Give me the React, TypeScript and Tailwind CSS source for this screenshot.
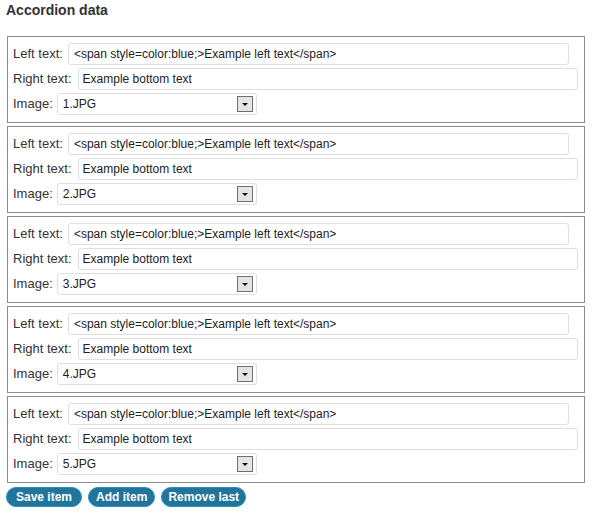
import { useState } from "react"

interface AccordionItem {
  id: number
  left: string
  right: string
  image: string
}

const initialItems: AccordionItem[] = [1, 2, 3, 4, 5].map((n) => ({
  id: n,
  left: "<span style=color:blue;>Example left text</span>",
  right: "Example bottom text",
  image: `${n}.JPG`,
}))

function ItemBox({ item }: { item: AccordionItem }) {
  return (
    <div className="border border-[#8c8c8c] bg-white pl-[5px] pt-[6px] pb-[7px] flex flex-col gap-[3px]">
      <div className="flex items-center gap-[5px]">
        <span className="text-[13px] text-[#333]">Left text:</span>
        <input
          type="text"
          readOnly
          value={item.left}
          className="w-[501px] h-[22px] px-[5px] border border-[#dfdfdf] rounded-[3px] text-[12px] text-[#222] bg-white focus:outline-none"
        />
      </div>
      <div className="flex items-center gap-[6px]">
        <span className="text-[13px] text-[#333]">Right text:</span>
        <input
          type="text"
          readOnly
          value={item.right}
          className="w-[500px] h-[22px] px-[4px] border border-[#dfdfdf] rounded-[3px] text-[12px] text-[#222] bg-white focus:outline-none"
        />
      </div>
      <div className="flex items-center gap-[4px]">
        <span className="text-[13px] text-[#333]">Image:</span>
        <div className="w-[200px] h-[22px] pl-[5px] pr-[3px] border border-[#dfdfdf] rounded-[3px] bg-white flex items-center justify-between">
          <span className="text-[12px] text-[#222]">{item.image}</span>
          <div className="w-[16px] h-[16px] border border-[#6f6f6f] bg-[#e4e4e4] flex items-center justify-center">
            <svg width="8" height="5" viewBox="0 0 8 5">
              <path d="M1 1h6L4 4z" fill="#111" />
            </svg>
          </div>
        </div>
      </div>
    </div>
  )
}

export default function App() {
  const [items] = useState(initialItems)

  return (
    <div className="w-[599px] h-[528px] bg-white px-[7px] font-['Liberation_Sans',Arial,sans-serif]">
      <h3 className="pt-[1px] -ml-[1px] text-[14px] font-bold text-[#333] leading-[18px]">Accordion data</h3>
      <div className="mt-[17px] w-[578px] flex flex-col gap-[3px]">
        {items.map((item) => (
          <ItemBox key={item.id} item={item} />
        ))}
      </div>
      <div className="mt-[4px] -ml-[1px] flex gap-[6px]">
        <button className="h-[20px] px-[9px] rounded-full bg-[#21759b] border border-[#298cba] text-white text-[12px] font-bold leading-none">
          Save item
        </button>
        <button className="h-[20px] px-[7px] rounded-full bg-[#21759b] border border-[#298cba] text-white text-[12px] font-bold leading-none">
          Add item
        </button>
        <button className="h-[20px] px-[6px] rounded-full bg-[#21759b] border border-[#298cba] text-white text-[12px] font-bold leading-none">
          Remove last
        </button>
      </div>
    </div>
  )
}
